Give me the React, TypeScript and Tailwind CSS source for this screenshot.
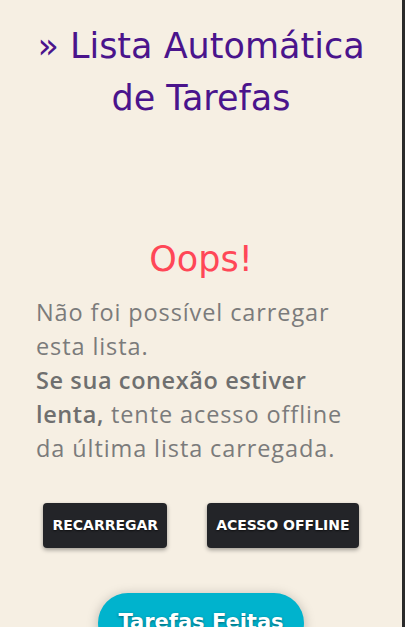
import React from 'react';

const App: React.FC = () => {
  return (
    <div className="flex h-[627px] w-full overflow-hidden font-['DejaVu_Sans',sans-serif]">
      {/* Page */}
      <div className="flex-1 bg-[#f6efe3] flex flex-col items-center">
        <h1 className="pt-[20px] text-center text-[35px] leading-[52px] font-normal text-[#4a148c]">
          » Lista Automática
          <br />
          de Tarefas
        </h1>

        <h2 className="mt-[110px] text-center text-[35px] leading-[50px] text-[#ff4757]">Oops!</h2>

        <p className="mt-[11px] w-full px-[36px] font-['Open_Sans',sans-serif] text-[23.5px] leading-[34px] tracking-[0.9px] text-[#7b7b7b] whitespace-nowrap">
          Não foi possível carregar
          <br />
          esta lista.
          <br />
          <span className="font-semibold tracking-[0.6px] text-[#6f6f6f]">
            Se sua conexão estiver
            <br />
            lenta,
          </span>{' '}
          tente acesso offline
          <br />
          da última lista carregada.
        </p>

        <div className="mt-[38px] flex gap-[40px] justify-center">
          <button className="h-[45px] px-[9px] rounded-[4px] bg-[#232428] text-white text-[14px] font-semibold uppercase shadow-[0_2px_4px_rgba(0,0,0,0.35)] [text-shadow:0_1px_2px_rgba(0,0,0,0.6)]">
            Recarregar
          </button>
          <button className="h-[45px] px-[9px] rounded-[4px] bg-[#232428] text-white text-[14px] font-semibold uppercase shadow-[0_2px_4px_rgba(0,0,0,0.35)] [text-shadow:0_1px_2px_rgba(0,0,0,0.6)]">
            Acesso Offline
          </button>
        </div>

        <button className="mt-[45px] h-[60px] px-[20px] rounded-full bg-[#00b3cd] text-white text-[21px] font-semibold shadow-[0_2px_12px_rgba(0,0,0,0.25)] [text-shadow:0_1px_3px_rgba(0,0,0,0.45)] shrink-0">
          Tarefas Feitas
        </button>
      </div>

      {/* right edge strip */}
      <div className="w-[3px] bg-[#2a2a2a]" />
    </div>
  );
};

export default App;
